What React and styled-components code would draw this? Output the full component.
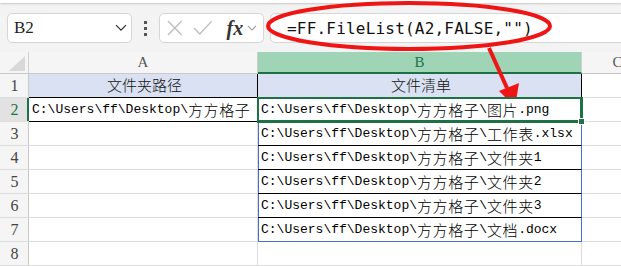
import React from "react";
import styled, { createGlobalStyle } from "styled-components";

const GREEN = "#1e7145";
const BLUE = "#4472c4";
const GRID = "#dcdcdc";

const base = "C:\\Users\\ff\\Desktop\\方方格子";
const files = ["图片.png", "工作表.xlsx", "文件夹1", "文件夹2", "文件夹3", "文档.docx"];

const GlobalStyle = createGlobalStyle`
  body {
    margin: 0;
    background: #fff;
  }
`;

const Sheet = styled.div`
  position: relative;
  width: 621px;
  height: 266px;
  overflow: hidden;
  background: #f3f3f3;
  font-family: "Liberation Serif", serif;
`;

const RibbonEdge = styled.div`
  height: 3px;
  background: #fff;
  box-shadow: 0 1px 2px rgba(0, 0, 0, 0.18);
`;

const FormulaBar = styled.div`
  display: flex;
  align-items: center;
  height: 30px;
  padding: 10px 0 9px 7px;
`;

const Box = styled.div`
  display: flex;
  align-items: center;
  height: 30px;
  box-sizing: border-box;
  background: #fff;
  border: 1px solid #d6d6d6;
  border-radius: 5px;
`;

const NameBox = styled(Box)`
  width: 125px;
  padding: 0 4px 0 6px;
  justify-content: space-between;
  font-size: 17px;
  color: #222;
`;

const Dots = styled.div`
  width: 27px;
  display: flex;
  flex-direction: column;
  align-items: center;
  gap: 3px;

  span {
    width: 3px;
    height: 3px;
    background: #555;
  }
`;

const FuncBox = styled(Box)`
  width: 105px;
  padding: 0 6px 0 7px;
  gap: 10px;
`;

const Fx = styled.span`
  font-family: "Liberation Serif", serif;
  font-style: italic;
  font-weight: bold;
  font-size: 20px;
  color: #333;
  margin-left: 4px;
  margin-right: -6px;
`;

const FormulaInput = styled(Box)`
  flex: 1;
  margin-left: 6px;
  margin-right: -8px;
  padding-left: 16px;
  font-family: "DejaVu Sans Mono", monospace;
  font-size: 16px;
  letter-spacing: 0.2px;
  color: #111;
`;

const Grid = styled.div`
  display: grid;
  grid-template-columns: 29px 229px 324px 72px;
  grid-template-rows: 22px;
  grid-auto-rows: 24px;
  background: #fff;
`;

const Corner = styled.div`
  position: relative;
  background: #f5f5f5;
  border-right: 1px solid #d0d0d0;
  border-bottom: 1px solid #c8c8c8;

  &::after {
    content: "";
    position: absolute;
    right: 3px;
    bottom: 2px;
    width: 16px;
    height: 15px;
    background: #d8d8d8;
    clip-path: polygon(100% 0, 100% 100%, 0 100%);
  }
`;

const ColHeader = styled.div`
  display: flex;
  align-items: center;
  justify-content: center;
  font-size: 15px;
  background: ${(p) => (p.$active ? "#9fd5b6" : "#f5f5f5")};
  color: ${(p) => (p.$active ? GREEN : "#555")};
  border-right: 1px solid #d0d0d0;
  border-bottom: ${(p) => (p.$active ? `2px solid ${GREEN}` : "1px solid #c8c8c8")};
`;

const RowHeader = styled.div`
  display: flex;
  align-items: flex-end;
  justify-content: center;
  padding-bottom: 2px;
  box-sizing: border-box;
  font-size: 16px;
  background: ${(p) => (p.$active ? "#e2e2e2" : "#f5f5f5")};
  color: ${(p) => (p.$active ? GREEN : "#444")};
  border-bottom: 1px solid ${GRID};
  box-shadow: inset ${(p) => (p.$active ? `-2px 0 0 ${GREEN}` : "-1px 0 0 #c8c8c8")};
`;

const Cell = styled.div`
  position: relative;
  display: flex;
  align-items: flex-end;
  justify-content: ${(p) => (p.$center ? "center" : "flex-start")};
  box-sizing: border-box;
  padding: 0 0 3px 3px;
  font-family: "Liberation Mono", monospace;
  font-size: 13px;
  line-height: 17px;
  white-space: nowrap;
  color: #000;
  background: ${(p) => p.$fill || "#fff"};
  border-right: 1px solid ${(p) => p.$right || GRID};
  border-bottom: 1px solid ${(p) => p.$bottom || GRID};
  box-shadow: ${(p) => (p.$spill ? `inset 1px 0 0 ${BLUE}` : "none")};
  ${(p) =>
    p.$selected &&
    `
    z-index: 2;
    box-shadow: 0 0 0 1px ${GREEN}, inset 0 0 0 1px ${GREEN};
    &::after {
      content: "";
      position: absolute;
      right: -4px;
      bottom: -4px;
      width: 5px;
      height: 5px;
      background: ${GREEN};
      border: 1px solid #fff;
    }
  `}
`;

const Cjk = styled.span`
  font-family: "Noto Sans CJK SC", sans-serif;
  font-weight: 300;
  font-size: 15px;
  letter-spacing: 0.55px;
  line-height: 17px;
`;

const HeadText = styled.span`
  font-family: "Noto Sans CJK SC", sans-serif;
  font-weight: 300;
  font-size: 15px;
  line-height: 19px;
  color: #111;
`;

const Overlay = styled.svg`
  position: absolute;
  top: 0;
  left: 0;
  pointer-events: none;
`;

const MixedText = ({ text }) =>
  text
    .split(/([\u3400-\u9fff]+)/)
    .filter(Boolean)
    .map((part, i) =>
      /[\u3400-\u9fff]/.test(part) ? <Cjk key={i}>{part}</Cjk> : <span key={i}>{part}</span>
    );

const Chevron = ({ color, size = 12 }) => (
  <svg width={size} height={size * 0.6} viewBox="0 0 12 7">
    <path d="M1 1 L6 6 L11 1" fill="none" stroke={color} strokeWidth="1.3" />
  </svg>
);

export default function App() {
  return (
    <Sheet>
      <GlobalStyle />
      <RibbonEdge />
      <FormulaBar>
        <NameBox>
          <span>B2</span>
          <Chevron color="#333" />
        </NameBox>
        <Dots>
          <span />
          <span />
          <span />
        </Dots>
        <FuncBox>
          <svg width="16" height="16" viewBox="0 0 16 16">
            <path d="M1 1 L15 15 M15 1 L1 15" stroke="#bdbdbd" strokeWidth="1.4" />
          </svg>
          <svg width="20" height="16" viewBox="0 0 20 16">
            <path d="M1 8 L7 14 L19 1" fill="none" stroke="#bdbdbd" strokeWidth="1.4" />
          </svg>
          <Fx>fx</Fx>
          <Chevron color="#999" size={10} />
        </FuncBox>
        <FormulaInput>=FF.FileList(A2,FALSE,"")</FormulaInput>
      </FormulaBar>

      <Grid>
        <Corner />
        <ColHeader>A</ColHeader>
        <ColHeader $active>B</ColHeader>
        <ColHeader>C</ColHeader>

        <RowHeader>1</RowHeader>
        <Cell $center $fill="#d9e1f2" $right="#000" $bottom="#000">
          <HeadText>文件夹路径</HeadText>
        </Cell>
        <Cell $center $fill="#d9e1f2" $right="#000" $bottom={GREEN}>
          <HeadText>文件清单</HeadText>
        </Cell>
        <Cell />

        <RowHeader $active>2</RowHeader>
        <Cell $bottom="#000" $right={GREEN}>
          <MixedText text={base} />
        </Cell>
        <Cell $selected $right={GREEN} $bottom={GREEN}>
          <MixedText text={`${base}\\${files[0]}`} />
        </Cell>
        <Cell />

        {files.slice(1).map((f, i) => (
          <React.Fragment key={f}>
            <RowHeader>{i + 3}</RowHeader>
            <Cell />
            <Cell $spill $right={BLUE} $bottom={i === files.length - 2 ? BLUE : "#000"}>
              <MixedText text={`${base}\\${f}`} />
            </Cell>
            <Cell />
          </React.Fragment>
        ))}

        <RowHeader>8</RowHeader>
        <Cell />
        <Cell />
        <Cell />
      </Grid>

      <Overlay width="621" height="266" viewBox="0 0 621 266">
        <ellipse cx="409" cy="26" rx="141" ry="23" fill="none" stroke="#ee1515" strokeWidth="4" />
        <path d="M489 48 L507 88" stroke="#ee1515" strokeWidth="4" />
        <polygon points="499,91 519,83 515,107" fill="#ee1515" />
      </Overlay>
    </Sheet>
  );
}
